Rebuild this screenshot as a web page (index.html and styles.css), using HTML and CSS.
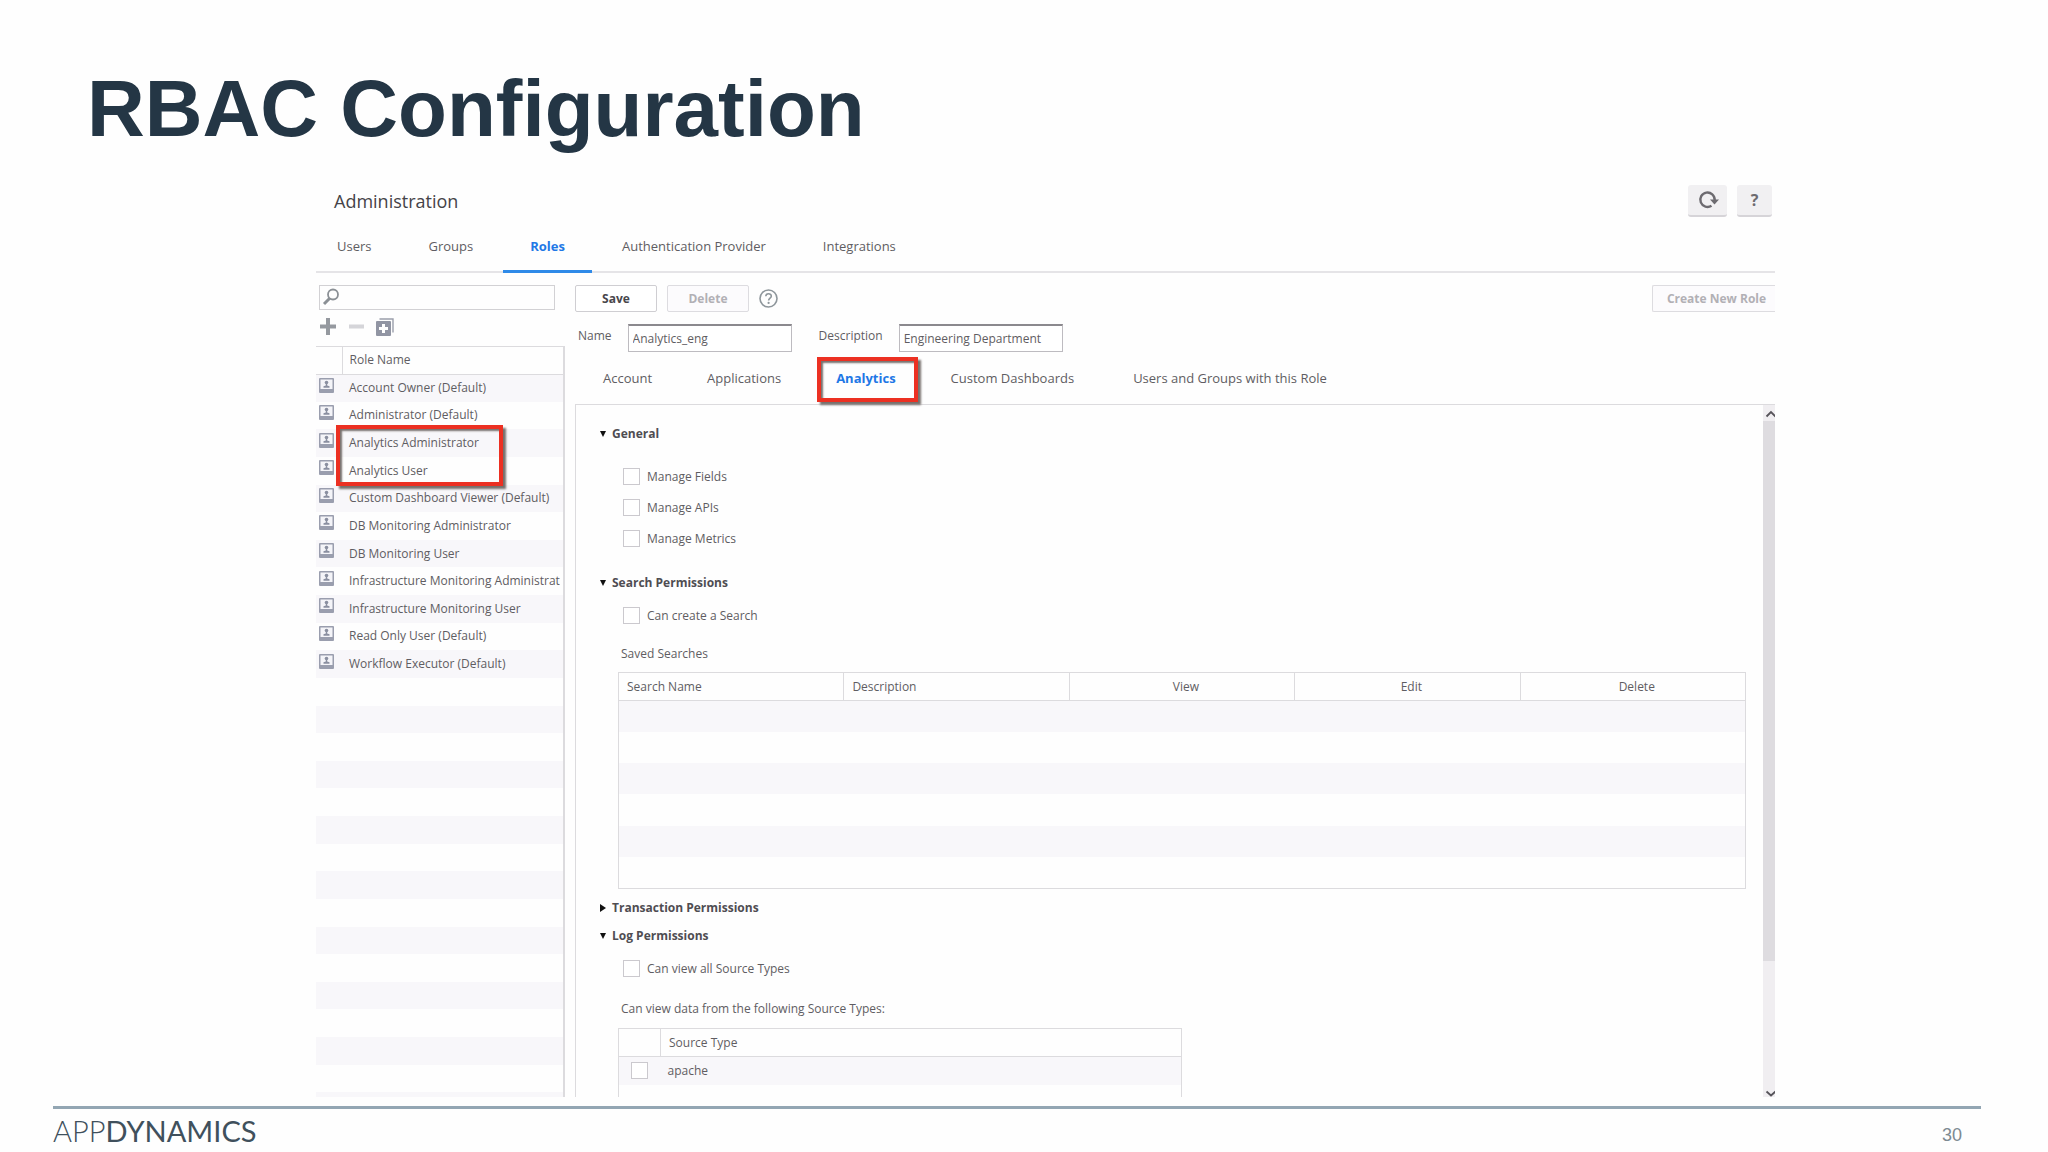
FILE: index.html
```html
<!DOCTYPE html>
<html lang="en">
<head>
  <meta charset="utf-8">
  <title>RBAC Configuration</title>
  <link rel="stylesheet" href="styles.css">
</head>
<body>

<svg class="sprite" aria-hidden="true">
  <symbol id="role" viewBox="0 0 15 15">
    <rect x="0" y="0" width="15" height="15" rx="1" fill="#9a9eae"/>
    <rect x="1.500" y="1.500" width="12" height="9.500" fill="#f4f4f8"/>
    <circle cx="7.5" cy="4.5" r="1.8" fill="#8a8fa0"/>
    <path d="M6.8 5.5h1.4v2l2.3.8v1.5h-6V8.300l2.300-.8z" fill="#8a8fa0"/>
  </symbol>
</svg>

<div class="slide">
  <h1 class="title">RBAC Configuration</h1>

  <div class="app">
    <div class="app-head">
      <h2 class="app-title">Administration</h2>
      <button class="icon-button wide" aria-label="Refresh">
        <svg width="22" height="20" viewBox="0 0 22 20"><path d="M14.500 15.700A7.200 7.200 0 1 1 17.700 10" fill="none" stroke="#6d6b70" stroke-width="2.400"/><path d="M13 9.500h9l-4.500 5z" fill="#6d6b70"/></svg>
      </button>
      <button class="icon-button">?</button>
    </div>

    <nav class="tabs">
      <a href="#" class="tab">Users</a>
      <a href="#" class="tab">Groups</a>
      <a href="#" class="tab active">Roles</a>
      <a href="#" class="tab">Authentication Provider</a>
      <a href="#" class="tab">Integrations</a>
    </nav>

    <div class="columns">
      <aside class="sidebar">
        <div class="search">
          <svg width="18" height="18" viewBox="0 0 18 18"><circle cx="11" cy="6.500" r="5" fill="none" stroke="#8b9095" stroke-width="1.800"/><path d="M7.500 10.500 2 16" stroke="#8b9095" stroke-width="3"/></svg>
          <input type="text" class="search-input" aria-label="Search roles">
        </div>
        <div class="tools">
          <button class="tool" aria-label="Add"><svg width="16" height="17" viewBox="0 0 16 17"><path d="M8 0v17M0 8.500h16" stroke="#95999f" stroke-width="4"/></svg></button>
          <button class="tool" aria-label="Remove"><svg width="16" height="17" viewBox="0 0 16 17"><path d="M1 8.500h15" stroke="#d5d5d9" stroke-width="4"/></svg></button>
          <button class="tool" aria-label="Duplicate"><svg width="18" height="18" viewBox="0 0 18 18"><path d="M3.500 1h13.500v13.500" fill="none" stroke="#9a9eab" stroke-width="1.400"/><rect x="0" y="3" width="15" height="15" rx="1" fill="#9195a3"/><path d="M7.500 6v9M3 10.500h9" stroke="#fff" stroke-width="3"/></svg></button>
        </div>
        <div class="role-box">
          <table class="roles">
            <thead><tr><th class="pic"></th><th>Role Name</th></tr></thead>
            <tbody>
              <tr><td class="pic"><svg><use href="#role"/></svg></td><td>Account Owner (Default)</td></tr>
              <tr><td class="pic"><svg><use href="#role"/></svg></td><td>Administrator (Default)</td></tr>
              <tr><td class="pic"><svg><use href="#role"/></svg></td><td class="marked">Analytics Administrator<div class="highlight role-mark"></div></td></tr>
              <tr><td class="pic"><svg><use href="#role"/></svg></td><td>Analytics User</td></tr>
              <tr><td class="pic"><svg><use href="#role"/></svg></td><td>Custom Dashboard Viewer (Default)</td></tr>
              <tr><td class="pic"><svg><use href="#role"/></svg></td><td>DB Monitoring Administrator</td></tr>
              <tr><td class="pic"><svg><use href="#role"/></svg></td><td>DB Monitoring User</td></tr>
              <tr><td class="pic"><svg><use href="#role"/></svg></td><td><div class="clip">Infrastructure Monitoring Administrator</div></td></tr>
              <tr><td class="pic"><svg><use href="#role"/></svg></td><td>Infrastructure Monitoring User</td></tr>
              <tr><td class="pic"><svg><use href="#role"/></svg></td><td>Read Only User (Default)</td></tr>
              <tr><td class="pic"><svg><use href="#role"/></svg></td><td>Workflow Executor (Default)</td></tr>
              <tr><td colspan="2"></td></tr>
              <tr><td colspan="2"></td></tr>
              <tr><td colspan="2"></td></tr>
              <tr><td colspan="2"></td></tr>
              <tr><td colspan="2"></td></tr>
              <tr><td colspan="2"></td></tr>
              <tr><td colspan="2"></td></tr>
              <tr><td colspan="2"></td></tr>
              <tr><td colspan="2"></td></tr>
              <tr><td colspan="2"></td></tr>
              <tr><td colspan="2"></td></tr>
              <tr><td colspan="2"></td></tr>
              <tr><td colspan="2"></td></tr>
              <tr><td colspan="2"></td></tr>
              <tr><td colspan="2"></td></tr>
              <tr><td colspan="2"></td></tr>
            </tbody>
          </table>
        </div>
      </aside>

      <main class="detail">
        <div class="actions">
          <button class="button">Save</button>
          <button class="button" disabled>Delete</button>
          <svg class="help" width="19" height="19" viewBox="0 0 19 19"><circle cx="9.500" cy="9.500" r="8.500" fill="none" stroke="#8e969b" stroke-width="1.600"/><path d="M6.800 7.300c.1-3.500 5.600-3.300 5.500-.1 0 1.900-2.700 2-2.700 4.300" fill="none" stroke="#8e969b" stroke-width="1.600"/><circle cx="9.600" cy="13.900" r="1.100" fill="#8e969b"/></svg>
          <button class="button create" disabled>Create New Role</button>
        </div>

        <div class="fields">
          <label for="name">Name</label>
          <input type="text" id="name" class="field" value="Analytics_eng">
          <label for="description">Description</label>
          <input type="text" id="description" class="field" value="Engineering Department">
        </div>

        <nav class="subtabs">
          <a href="#" class="subtab">Account</a>
          <a href="#" class="subtab">Applications</a>
          <a href="#" class="subtab active">Analytics<span class="highlight tab-mark"></span></a>
          <a href="#" class="subtab">Custom Dashboards</a>
          <a href="#" class="subtab">Users and Groups with this Role</a>
        </nav>

        <div class="panel">
          <div class="panel-body">
            <details class="group" open>
              <summary>General</summary>
              <div class="checks first">
                <label class="check"><input type="checkbox">Manage Fields</label>
                <label class="check"><input type="checkbox">Manage APIs</label>
                <label class="check"><input type="checkbox">Manage Metrics</label>
              </div>
            </details>

            <details class="group search-group" open>
              <summary>Search Permissions</summary>
              <div class="checks">
                <label class="check"><input type="checkbox">Can create a Search</label>
              </div>
              <p class="caption">Saved Searches</p>
              <table class="grid searches">
                <thead>
                  <tr><th>Search Name</th><th>Description</th><th class="center">View</th><th class="center">Edit</th><th class="center">Delete</th></tr>
                </thead>
                <tbody>
                  <tr><td colspan="5"></td></tr>
                  <tr><td colspan="5"></td></tr>
                  <tr><td colspan="5"></td></tr>
                  <tr><td colspan="5"></td></tr>
                  <tr><td colspan="5"></td></tr>
                  <tr><td colspan="5"></td></tr>
                </tbody>
              </table>
            </details>

            <details class="group closed-group">
              <summary>Transaction Permissions</summary>
            </details>

            <details class="group log-group" open>
              <summary>Log Permissions</summary>
              <div class="checks">
                <label class="check"><input type="checkbox">Can view all Source Types</label>
              </div>
              <p class="caption">Can view data from the following Source Types:</p>
              <table class="grid sources">
                <thead>
                  <tr><th class="tick"></th><th>Source Type</th></tr>
                </thead>
                <tbody>
                  <tr><td class="tick"><input type="checkbox" id="apache"></td><td><label for="apache">apache</label></td></tr>
                  <tr><td class="tick"></td><td></td></tr>
                </tbody>
              </table>
            </details>
          </div>
          <div class="scrollbar">
            <svg class="arrow" width="12" height="16" viewBox="0 0 12 16"><path d="M3.500 11.500 8 7l4.500 4.500" fill="none" stroke="#56545a" stroke-width="1.800"/></svg>
            <div class="thumb"></div>
            <svg class="arrow" width="12" height="8" viewBox="0 0 12 8"><path d="M3.500 2.500 8 6.500l4.500-4" fill="none" stroke="#56545a" stroke-width="1.800"/></svg>
          </div>
        </div>
      </main>
    </div>
  </div>

  <footer class="footer">
    <div class="logo">APP<b>DYNAMICS</b></div>
    <div class="page">30</div>
  </footer>
</div>

</body>
</html>
```
FILE: styles.css
```css
* {
    box-sizing: border-box;
}

body {
    margin: 0;
    background-color: #fefefe;
    font-family: "Open Sans", "Noto Sans", sans-serif;
    font-size: 12px;
    line-height: 18px;
    color: #5f5d62;
}

a {
    color: inherit;
    text-decoration: none;
}

button, input {
    font: inherit;
    color: inherit;
    margin: 0;
}

.sprite {
    position: absolute;
    width: 0;
    height: 0;
}

.slide {
    display: flex;
    flex-direction: column;
    height: 100vh;
}

.title {
    margin: 0;
    padding: 63px 0 0 87px;
    font-family: "Liberation Sans", Arial, sans-serif;
    font-size: 80px;
    line-height: 92px;
    color: #243645;
}

/* application window */
.app {
    flex: 1;
    min-height: 0;
    display: flex;
    flex-direction: column;
    margin: 30px 273px 9px 316px;
    overflow: hidden;
}

.app-head {
    display: flex;
    align-items: flex-start;
    gap: 10px;
    height: 44px;
    padding-right: 3px;
}

.app-title {
    flex: 1;
    margin: 0;
    padding-left: 18px;
    font-size: 18px;
    font-weight: normal;
    line-height: 32px;
    color: #454348;
}

.icon-button {
    display: flex;
    align-items: center;
    justify-content: center;
    width: 35px;
    height: 32px;
    padding: 0;
    border: 0;
    border-bottom: 2px solid #d6d4d8;
    border-radius: 3px;
    background-color: #f1f0f2;
    font-size: 16px;
    font-weight: bold;
    color: #6d6b70;
}

.icon-button.wide {
    width: 39px;
}

.tabs {
    display: flex;
    gap: 3px;
    height: 44px;
    border-bottom: 2px solid #e5e4e7;
}

.tab {
    height: 44px;
    padding: 8px 27px 0;
    font-size: 13px;
}

.tab:first-child {
    padding-left: 21px;
}

.tab.active {
    border-bottom: 3px solid #2f8ae8;
    font-weight: bold;
    color: #1f78e6;
}

.columns {
    flex: 1;
    min-height: 0;
    display: grid;
    grid-template-columns: 249px 1fr;
    grid-template-rows: 100%;
    gap: 10px;
}

/* left side */
.sidebar {
    display: flex;
    flex-direction: column;
    padding-top: 12px;
}

.search {
    display: flex;
    height: 25px;
    margin: 0 10px 0 3px;
    padding: 2px;
    border: 1px solid #d2d1d4;
}

.search-input {
    flex: 1;
    min-width: 0;
    border: 0;
    background: none;
    outline: none;
}

.tools {
    display: flex;
    gap: 12px;
    padding: 8px 4px 11px;
}

.tool {
    height: 17px;
    padding: 0;
    border: 0;
    background: none;
}

.tool svg {
    display: block;
}

.role-box {
    flex: 1;
    min-height: 0;
    overflow: hidden;
    border-top: 1px solid #dcdbde;
    border-right: 2px solid #dcdbde;
}

.roles {
    width: 100%;
    height: 773px;
    table-layout: fixed;
    border-collapse: collapse;
}

.roles th, .roles td {
    height: 27px;
    padding: 0 0 0 7px;
    text-align: left;
    font-weight: normal;
    white-space: nowrap;
}

.roles th {
    border-bottom: 1px solid #dcdbde;
}

.roles th.pic {
    border-right: 1px solid #dcdbde;
}

.roles .pic {
    width: 26px;
    padding: 0 0 0 3px;
}

.roles .pic svg {
    display: block;
    width: 15px;
    height: 15px;
    margin-bottom: 6px;
}

.roles tbody tr:nth-child(odd), .grid tbody tr:nth-child(odd) {
    background-color: #f8f7fa;
}

.clip {
    margin-right: 3px;
    overflow: hidden;
}

/* red callout frames */
.highlight {
    position: absolute;
    border: 4px solid #ec3022;
    box-shadow: 3px 3px 2px #77706d, inset 2px 2px 2px #77706d;
    pointer-events: none;
}

.marked {
    position: relative;
}

.role-mark {
    top: -4px;
    left: -6px;
    width: 167px;
    height: 61px;
}

.tab-mark {
    top: 5px;
    left: 9px;
    right: 5px;
    height: 45px;
}

/* right side */
.detail {
    display: flex;
    flex-direction: column;
    min-width: 0;
    padding-top: 12px;
}

.actions {
    display: flex;
    align-items: center;
    gap: 10px;
    height: 27px;
}

.button {
    width: 82px;
    height: 27px;
    padding: 0;
    border: 1px solid #cfced2;
    border-radius: 2px;
    background-color: #fff;
    font-weight: bold;
    color: #48464b;
}

.button:disabled {
    border-color: #dddce0;
    background-color: #fcfbfd;
    color: #b2b0b5;
}

.create {
    width: 123px;
    margin-left: auto;
    padding-left: 5px;
    border-right: 0;
    border-radius: 2px 0 0 2px;
}

.fields {
    display: flex;
    align-items: center;
    gap: 16px;
    padding: 12px 0 0 3px;
}

.fields label {
    padding-bottom: 4px;
}

.field {
    width: 164px;
    height: 28px;
    margin-right: 11px;
    padding: 0 4px;
    border: 1px solid #bdbbc0;
    border-top: 2px solid #8b898e;
    background-color: #fff;
}

.subtabs {
    display: flex;
    height: 52px;
}

.subtab {
    position: relative;
    padding: 17px 27px 0 28px;
    font-size: 13px;
}

.subtab.active {
    font-weight: bold;
    color: #1f78e6;
}

.subtab:last-child {
    padding-left: 32px;
}

.panel {
    flex: 1;
    min-height: 0;
    display: flex;
    border-top: 1px solid #dcdbde;
    border-left: 1px solid #dcdbde;
}

.panel-body {
    flex: 1;
    min-width: 0;
    overflow: hidden;
    padding: 20px 17px 0 24px;
}

.scrollbar {
    display: flex;
    flex-direction: column;
    width: 12px;
    background-color: #f0eef1;
}

.thumb {
    height: 78%;
    margin-bottom: auto;
    background-color: #dedce0;
}

/* permission groups */
.group summary {
    display: flex;
    align-items: center;
    gap: 6px;
    height: 18px;
    font-weight: bold;
    color: #4f4d52;
}

.group summary::before {
    content: "";
    border-top: 6px solid #111;
    border-left: 3px solid transparent;
    border-right: 3px solid transparent;
}

.group:not([open]) summary::before {
    border-top: 4px solid transparent;
    border-bottom: 4px solid transparent;
    border-left: 6px solid #111;
    border-right: 0;
}

.checks {
    display: flex;
    flex-direction: column;
    gap: 13px;
    padding: 15px 0 0 23px;
}

.checks.first {
    padding-top: 25px;
}

.check {
    display: flex;
    gap: 7px;
}

input[type="checkbox"] {
    appearance: none;
    width: 17px;
    height: 17px;
    border: 1px solid #cbc9ce;
    background-color: #fff;
}

.search-group {
    margin-top: 26px;
}

.closed-group {
    margin-top: 10px;
}

.log-group {
    margin-top: 10px;
}

.caption {
    margin: 20px 0 9px 21px;
}

.log-group .caption {
    margin-top: 22px;
    margin-bottom: 10px;
}

.grid {
    margin-left: 18px;
    table-layout: fixed;
    border-collapse: collapse;
    border: 1px solid #dcdbde;
}

.grid th {
    height: 28px;
    padding: 0 0 0 8px;
    border: 1px solid #dcdbde;
    text-align: left;
    font-weight: normal;
}

.grid .center {
    text-align: center;
}

.searches {
    width: calc(100% - 18px);
    height: 217px;
}

.searches td {
    height: 31px;
}

.sources {
    width: 564px;
}

.grid .tick {
    width: 42px;
    padding: 0 0 0 12px;
}

.sources td {
    height: 28px;
    padding: 0 0 0 7px;
}

.tick input {
    display: block;
}

/* footer */
.footer {
    display: flex;
    align-items: center;
    justify-content: space-between;
    height: 46px;
    margin: 0 67px 0 53px;
    padding-right: 19px;
    border-top: 3px solid #93a6b3;
}

.logo {
    font-family: Lato, sans-serif;
    font-size: 29px;
    font-weight: 300;
    line-height: 32px;
    color: #40505c;
}

.page {
    padding-top: 8px;
    font-family: "Liberation Sans", Arial, sans-serif;
    font-size: 18px;
    color: #7d8a92;
}
```
